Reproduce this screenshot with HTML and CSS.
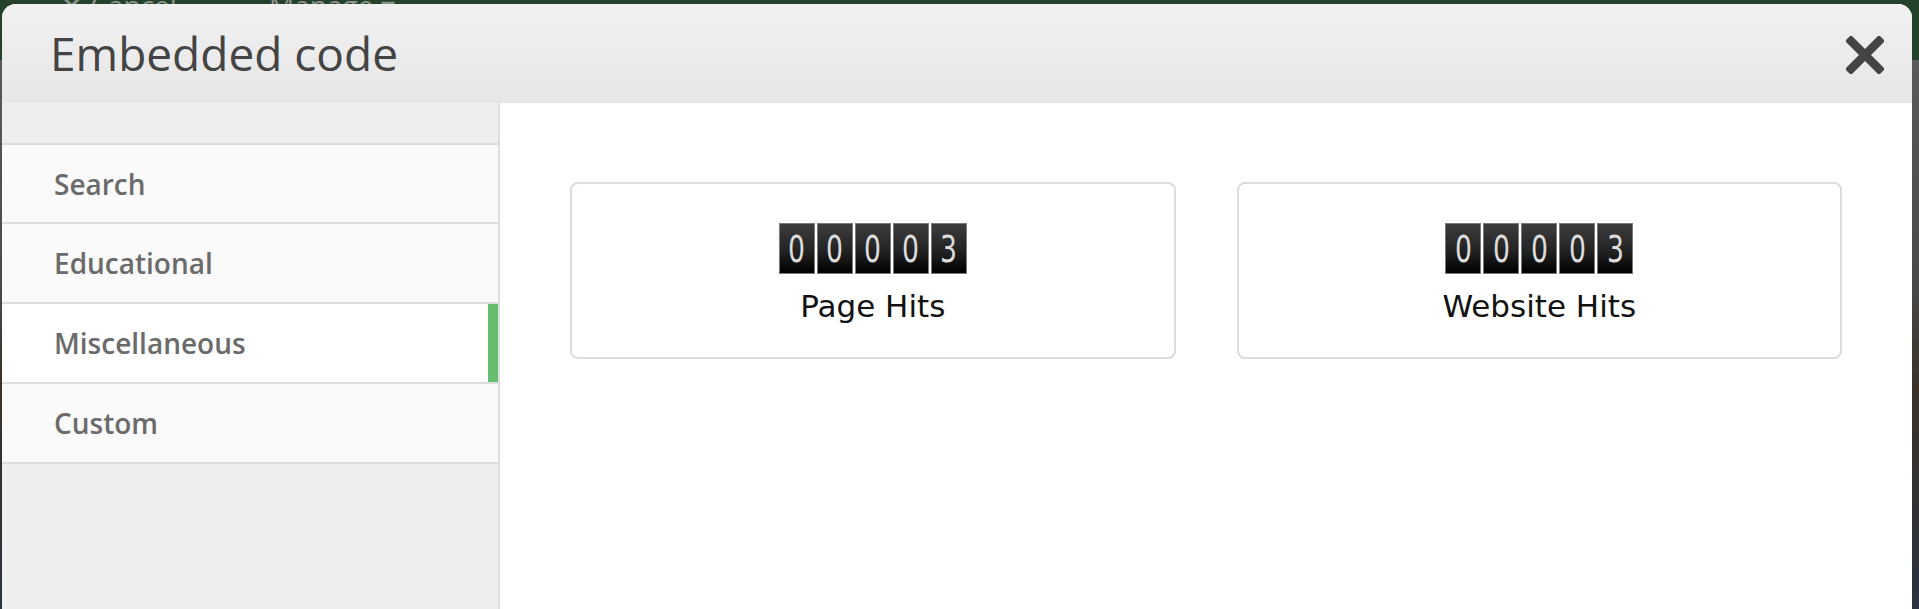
FILE: index.html
```html
<!DOCTYPE html>
<html lang="en">
<head>
<meta charset="utf-8">
<title>Embedded code</title>
<link rel="stylesheet" href="styles.css">
</head>
<body>
<div class="page">
  <div class="toolbar">
    <span class="tb-item">&#10005; Cancel</span>
    <span class="tb-item">&#9776; Manage &#9662;</span>
  </div>
  <div class="page-rest"></div>
</div>

<div class="modal">
  <header class="modal-header">
    <h1 class="modal-title">Embedded code</h1>
    <button class="close-btn" aria-label="Close">
      <svg width="38" height="38" viewBox="0 0 38 38">
        <path d="M5 5 L33 33 M33 5 L5 33" stroke="#444" stroke-width="8.5" stroke-linecap="square" fill="none"/>
      </svg>
    </button>
  </header>
  <div class="modal-body">
    <nav class="sidebar">
      <div class="nav-item">Search</div>
      <div class="nav-item">Educational</div>
      <div class="nav-item active">Miscellaneous</div>
      <div class="nav-item">Custom</div>
    </nav>
    <main class="content">
      <div class="card">
        <div class="counter">
          <span class="digit"><span>0</span></span>
          <span class="digit"><span>0</span></span>
          <span class="digit"><span>0</span></span>
          <span class="digit"><span>0</span></span>
          <span class="digit"><span>3</span></span>
        </div>
        <div class="card-label">Page Hits</div>
      </div>
      <div class="card">
        <div class="counter">
          <span class="digit"><span>0</span></span>
          <span class="digit"><span>0</span></span>
          <span class="digit"><span>0</span></span>
          <span class="digit"><span>0</span></span>
          <span class="digit"><span>3</span></span>
        </div>
        <div class="card-label">Website Hits</div>
      </div>
    </main>
  </div>
</div>
</body>
</html>
```

FILE: styles.css
```css
* { box-sizing: border-box; }

html, body {
  margin: 0;
  padding: 0;
  height: 100%;
  overflow: hidden;
}

body {
  background: #4f4f4f;
  font-family: "Open Sans", "DejaVu Sans", sans-serif;
}

.page {
  display: flex;
  flex-direction: column;
  height: 100%;
}

.toolbar {
  height: 60px;
  background: #24422b;
  display: flex;
  align-items: flex-end;
  gap: 60px;
  padding-left: 60px;
  overflow: hidden;
}

.tb-item {
  color: #8a938b;
  font-size: 28px;
  line-height: 28px;
  margin-bottom: 41px;
  font-family: "Open Sans", sans-serif;
}

.page-rest {
  flex: 1;
  background: linear-gradient(to bottom, #5a5a5a 0, #4a4a4a 40%, #3a3028 60%, #2a3340 100%);
}

.modal {
  position: absolute;
  left: 2px;
  top: 4px;
  width: 1910px;
  height: 700px;
  background: #fff;
  border-radius: 14px 14px 0 0;
  overflow: hidden;
  display: flex;
  flex-direction: column;
}

.modal-header {
  height: 99px;
  flex: none;
  background: linear-gradient(to bottom, #f1f1f1 0%, #e6e6e6 100%);
  display: flex;
  align-items: center;
  justify-content: space-between;
  padding: 0 28px 0 48px;
}

.modal-title {
  margin: 0;
  font-family: "Open Sans", sans-serif;
  font-weight: 400;
  font-size: 46px;
  color: #444;
  line-height: 1;
  padding-bottom: 1px;
}

.close-btn {
  border: 0;
  background: transparent;
  padding: 0;
  width: 38px;
  height: 38px;
  display: flex;
  margin-top: 2px;
}

.modal-body {
  flex: 1;
  display: grid;
  grid-template-columns: 498px 1fr;
}

.sidebar {
  background: #eeeeee;
  border-right: 2px solid #dddddd;
  padding-top: 40px;
}

.nav-item {
  height: 80px;
  background: #fafafa;
  border-bottom: 2px solid #dddddd;
  display: flex;
  align-items: center;
  padding-left: 52px;
  font-family: "Open Sans", sans-serif;
  font-weight: 600;
  font-size: 28px;
  color: #6b6b6b;
}

.nav-item:first-child {
  border-top: 2px solid #dddddd;
  height: 81px;
}

.nav-item.active {
  background: #fff;
  box-shadow: inset -10px 0 0 #66bd6d;
}

.content {
  display: grid;
  grid-template-columns: 1fr 1fr;
  column-gap: 61px;
  align-content: start;
  padding: 79px 70px 0 70px;
}

.card {
  height: 177px;
  border: 2px solid #dcdcdc;
  border-radius: 8px;
  display: flex;
  flex-direction: column;
  align-items: center;
  padding-top: 39px;
}

.counter {
  display: flex;
  gap: 2px;
  background: #fff;
}

.digit {
  width: 36px;
  height: 51px;
  background: linear-gradient(to bottom, #3c3c3e 0%, #232323 55%, #000 100%);
  border: 1px solid #7a7a7a;
  display: flex;
  align-items: center;
  justify-content: center;
  overflow: hidden;
}

.digit span {
  font-family: "DejaVu Sans Condensed", "DejaVu Sans", sans-serif;
  font-size: 37px;
  line-height: 1;
  color: #dcdcdc;
  transform: scaleX(0.8);
  display: inline-block;
  margin-top: 1px;
}

.card-label {
  margin-top: 14px;
  font-family: "DejaVu Sans", sans-serif;
  font-size: 31px;
  line-height: 36px;
  color: #111;
}
```
